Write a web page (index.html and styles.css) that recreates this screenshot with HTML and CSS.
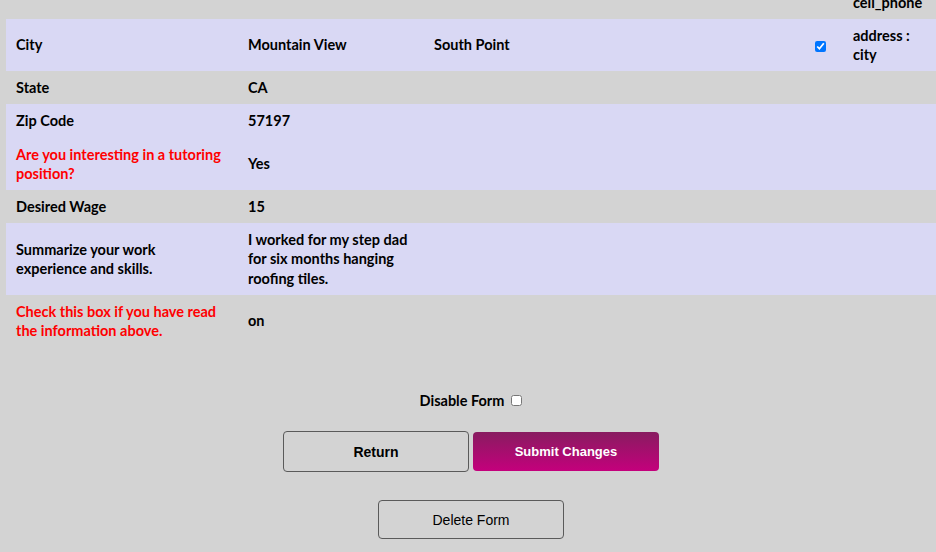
FILE: index.html
```html
<!DOCTYPE html>
<html>
<head>
<meta charset="utf-8">
<link rel="stylesheet" href="styles.css">
</head>
<body>
<table class="info">
  <colgroup>
    <col class="c-label"><col class="c-value"><col class="c-extra"><col class="c-check"><col class="c-field">
  </colgroup>
  <tr class="grey"><td></td><td></td><td></td><td></td><td>cell_phone</td></tr>
  <tr class="lav"><td>City</td><td>Mountain View</td><td>South Point</td><td class="chk"><input type="checkbox" checked></td><td>address : city</td></tr>
  <tr class="grey"><td>State</td><td>CA</td><td></td><td></td><td></td></tr>
  <tr class="lav"><td>Zip Code</td><td>57197</td><td></td><td></td><td></td></tr>
  <tr class="lav"><td class="red">Are you interesting in a tutoring position?</td><td>Yes</td><td></td><td></td><td></td></tr>
  <tr class="grey"><td>Desired Wage</td><td>15</td><td></td><td></td><td></td></tr>
  <tr class="lav"><td>Summarize your work experience and skills.</td><td>I worked for my step dad for six months hanging roofing tiles.</td><td></td><td></td><td></td></tr>
  <tr class="grey"><td class="red">Check this box if you have read the information above.</td><td>on</td><td></td><td></td><td></td></tr>
</table>
<div class="actions">
  <label class="disable">Disable Form <input type="checkbox"></label>
  <div class="btn-row">
    <button class="btn btn-outline">Return</button>
    <button class="btn btn-submit">Submit Changes</button>
  </div>
  <button class="btn btn-delete">Delete Form</button>
</div>
</body>
</html>
```

FILE: styles.css
```css
html {
  overflow: hidden;
  background: #d3d3d3;
}
body {
  margin: 0 0 0 6px;
  background: #d3d3d3;
  font-family: "Lato", "Open Sans", sans-serif;
  font-weight: 700;
  font-size: 14.5px;
  color: #000;
}
.info {
  margin-top: -14.4px;
  border-collapse: collapse;
  table-layout: fixed;
  width: 932px;
}
.c-label { width: 232px; }
.c-value { width: 186px; }
.c-extra { width: 377px; }
.c-check { width: 42px; }
.c-field { width: 95px; }
.info td {
  padding: 7px 10px;
  line-height: 19.2px;
  vertical-align: middle;
  text-align: left;
}
.info td.chk {
  padding: 0 10px;
}
.chk input {
  margin: 0 0 0 4px;
  width: 11px;
  height: 11px;
  vertical-align: middle;
}
.lav { background: #d9d8f4; }
.grey { background: #d3d3d3; }
.red { color: #ff0000; }
.actions {
  margin-top: 44px;
  display: flex;
  flex-direction: column;
  align-items: center;
}
.disable {
  line-height: 19px;
  display: flex;
  align-items: center;
}
.disable input {
  margin: 0 0 0 7px;
  width: 11px;
  height: 11px;
}
.btn-row {
  margin-top: 21px;
  display: flex;
  gap: 4px;
  align-items: center;
}
.btn {
  font-family: "Liberation Sans", Arial, sans-serif;
  width: 186px;
  border-radius: 4px;
  color: #000;
  cursor: pointer;
}
.btn-outline {
  height: 41px;
  background: transparent;
  border: 1px solid #5a5a5a;
  font-size: 14px;
  font-weight: 700;
}
.btn-submit {
  height: 39px;
  border: none;
  background: linear-gradient(#881c60, #c4007c);
  color: #fff;
  font-size: 13px;
  font-weight: 700;
}
.btn-delete {
  margin-top: 28px;
  height: 39px;
  background: transparent;
  border: 1px solid #5a5a5a;
  font-size: 14px;
  font-weight: 400;
}
```
